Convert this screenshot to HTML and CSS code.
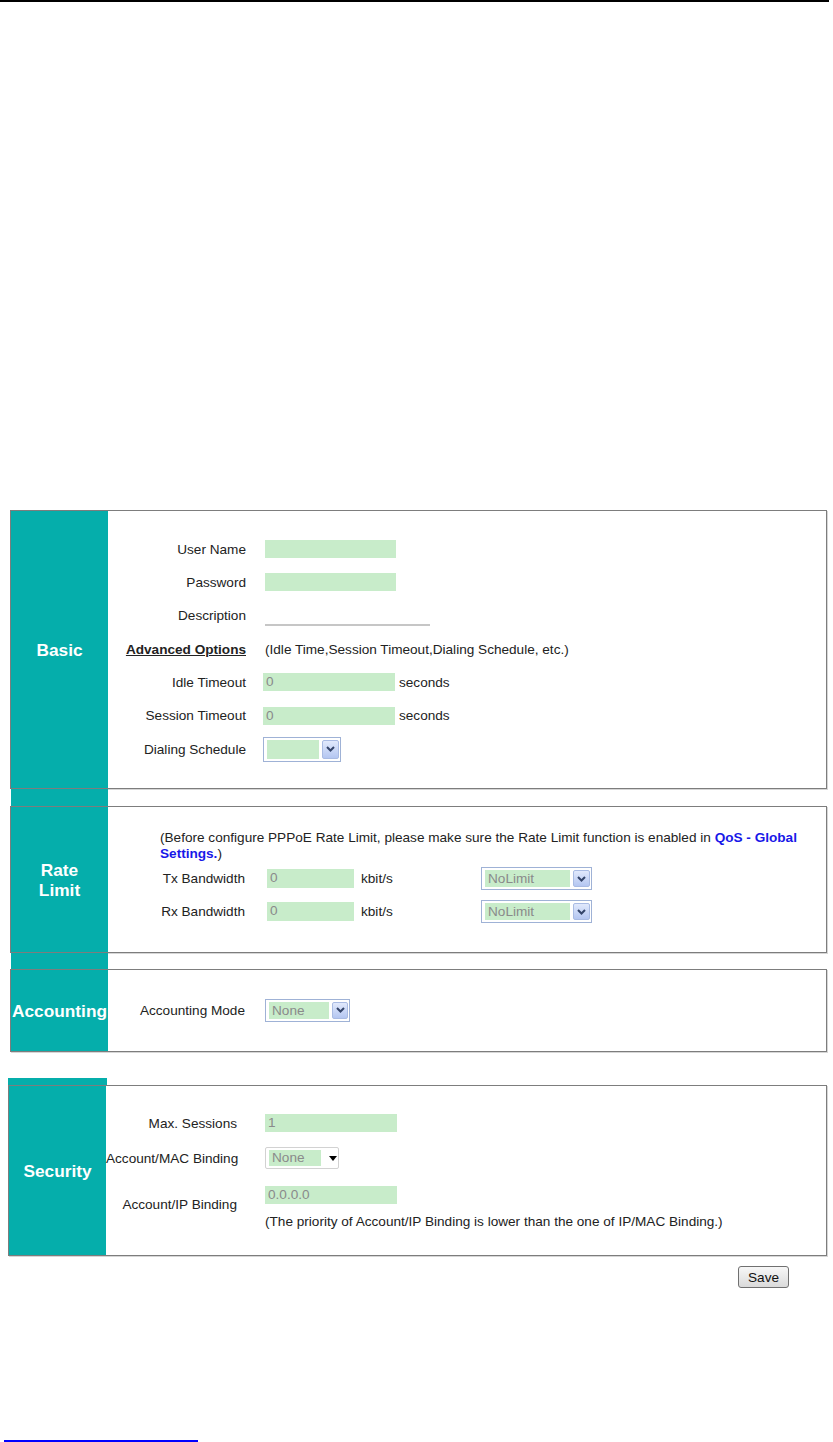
FILE: index.html
```html
<!DOCTYPE html>
<html lang="en">
<head>
    <meta charset="UTF-8">
    <meta name="viewport" content="width=device-width, initial-scale=1.0">
    <title>PPPoE Account</title>
    <link rel="stylesheet" href="styles.css">
</head>
<body>

<div class="top-rule"></div>

<div class="page">

    <!-- Basic -->
    <div class="panel panel-basic">
        <div class="panel-title">Basic</div>
        <div class="panel-body">
            <div class="row">
                <div class="label">User Name</div>
                <span class="input"></span>
            </div>
            <div class="row">
                <div class="label">Password</div>
                <span class="input"></span>
            </div>
            <div class="row">
                <div class="label">Description</div>
                <span class="input input-line"></span>
            </div>
            <div class="row">
                <div class="label"><a class="adv-link">Advanced Options</a></div>
                <span>(Idle Time,Session Timeout,Dialing Schedule, etc.)</span>
            </div>
            <div class="row">
                <div class="label">Idle Timeout</div>
                <span class="input input-shift">0</span>
                <span class="unit">seconds</span>
            </div>
            <div class="row">
                <div class="label">Session Timeout</div>
                <span class="input input-shift">0</span>
                <span class="unit">seconds</span>
            </div>
            <div class="row">
                <div class="label">Dialing Schedule</div>
                <span class="select select-sched input-shift">
                    <span class="select-value"></span>
                    <span class="select-btn"><svg width="9" height="6" viewBox="0 0 9 6"><path d="M1 1 L4.5 4.5 L8 1" fill="none" stroke="#34456a" stroke-width="2"/></svg></span>
                </span>
            </div>
        </div>
    </div>
    <div class="connector"></div>

    <!-- Rate Limit -->
    <div class="panel panel-rate">
        <div class="panel-title">Rate<br>Limit</div>
        <div class="panel-body">
            <p class="note">(Before configure PPPoE Rate Limit, please make sure the Rate Limit function is enabled in <a class="link">QoS - Global<br>Settings.</a>)</p>
            <div class="row">
                <div class="label">Tx Bandwidth</div>
                <span class="input input-rate">0</span>
                <span class="unit unit-rate">kbit/s</span>
                <span class="select select-limit">
                    <span class="select-value">NoLimit</span>
                    <span class="select-btn"><svg width="9" height="6" viewBox="0 0 9 6"><path d="M1 1 L4.5 4.5 L8 1" fill="none" stroke="#34456a" stroke-width="2"/></svg></span>
                </span>
            </div>
            <div class="row">
                <div class="label">Rx Bandwidth</div>
                <span class="input input-rate">0</span>
                <span class="unit unit-rate">kbit/s</span>
                <span class="select select-limit">
                    <span class="select-value">NoLimit</span>
                    <span class="select-btn"><svg width="9" height="6" viewBox="0 0 9 6"><path d="M1 1 L4.5 4.5 L8 1" fill="none" stroke="#34456a" stroke-width="2"/></svg></span>
                </span>
            </div>
        </div>
    </div>
    <div class="connector connector-short"></div>

    <!-- Accounting -->
    <div class="panel panel-acct">
        <div class="panel-title">Accounting</div>
        <div class="panel-body">
            <div class="row">
                <div class="label">Accounting Mode</div>
                <span class="select select-acct">
                    <span class="select-value">None</span>
                    <span class="select-btn"><svg width="9" height="6" viewBox="0 0 9 6"><path d="M1 1 L4.5 4.5 L8 1" fill="none" stroke="#34456a" stroke-width="2"/></svg></span>
                </span>
            </div>
        </div>
    </div>

    <!-- Security -->
    <div class="sec-tab"></div>
    <div class="panel panel-sec">
        <div class="panel-title">Security</div>
        <div class="panel-body sec-grid">
            <div class="label">Max. Sessions</div>
            <span class="input input-sec">1</span>

            <div class="label">Account/MAC Binding</div>
            <span class="plain-select">
                <span class="select-value">None</span>
                <span class="caret"></span>
            </span>

            <div class="label">Account/IP Binding</div>
            <div class="ip-field">
                <span class="input input-sec">0.0.0.0</span>
                <div class="ip-note">(The priority of Account/IP Binding is lower than the one of IP/MAC Binding.)</div>
            </div>
        </div>
    </div>

    <div class="actions">
        <button class="save-btn" type="button">Save</button>
    </div>

    <div class="foot-rule"></div>
</div>

</body>
</html>
```

FILE: styles.css
```css
body {
    margin: 0;
    font-family: "Liberation Sans", Arial, sans-serif;
    font-size: 13.6px;
    color: #222;
    background: #fff;
}
.top-rule {
    width: 829px;
    height: 2px;
    background: #000;
}
.page {
    padding-top: 508px;
}

/* panels */
.panel {
    display: flex;
    box-sizing: border-box;
    width: 817px;
    margin-left: 10px;
    border: 1px solid #7d7d7d;
    box-shadow: 1px 1px 0 #d6d6d6;
}
.panel-title {
    flex: none;
    width: 97px;
    display: flex;
    align-items: center;
    justify-content: center;
    text-align: center;
    background-color: #05aeab;
    color: #fff;
    font-size: 17.3px;
    font-weight: bold;
    line-height: 20px;
    white-space: nowrap;
}
.panel-body {
    flex: 1;
}
.connector {
    width: 97px;
    height: 17px;
    margin-left: 11px;
    background-color: #05aeab;
}
.connector-short {
    height: 16px;
}

.row {
    display: flex;
    align-items: center;
    height: 33.33px;
}
.label {
    flex: none;
    text-align: right;
    white-space: nowrap;
}

/* basic */
.panel-basic {
    height: 279px;
}
.panel-basic .panel-body {
    padding-top: 21.5px;
}
.panel-basic .label {
    width: 138px;
    margin-right: 19px;
}
.adv-link {
    font-weight: bold;
    text-decoration: underline;
    color: #222;
}

.input {
    display: inline-block;
    box-sizing: border-box;
    width: 131px;
    height: 18px;
    padding-left: 3px;
    line-height: 18px;
    background-color: #c8ecca;
    color: #8a8a8a;
}
.input-line {
    width: 165px;
    height: 19px;
    margin-top: 2px;
    background: none;
    border-bottom: 2px solid #c6c6c6;
}
.input-shift {
    margin-left: -2px;
    width: 132px;
}
.unit {
    margin-left: 4px;
}

/* dropdowns */
.select {
    display: inline-flex;
    box-sizing: border-box;
    height: 25px;
    padding: 2px 1px 2px 3px;
    gap: 3px;
    border: 1px solid #9fb2d6;
    background: #fff;
}
.select-value {
    flex: 1;
    padding-left: 3px;
    line-height: 19px;
    background-color: #c8ecca;
    color: #8a8a8a;
}
.select-btn {
    display: flex;
    align-items: center;
    justify-content: center;
    box-sizing: border-box;
    width: 17px;
    border: 1px solid #a9bbe3;
    border-radius: 2px;
    background: linear-gradient(#e1e9fc, #b4c6f1);
}
.select-sched {
    width: 78px;
}
.select-limit {
    width: 111px;
    height: 23px;
}
.select-limit .select-value,
.select-acct .select-value {
    line-height: 17px;
}
.select-acct {
    width: 85px;
    height: 23px;
}
.select-acct .select-btn {
    width: 16px;
}

/* rate limit */
.panel-rate {
    height: 147px;
}
.panel-rate .panel-body {
    padding-top: 23px;
}
.panel-rate .label {
    width: 137px;
    margin-right: 22px;
}
.note {
    margin: 0;
    padding-left: 52px;
    line-height: 16px;
}
.link {
    color: #1818e8;
    font-weight: bold;
}
.input-rate {
    width: 87px;
    height: 19px;
}
.unit-rate {
    flex: none;
    width: 120px;
    margin-left: 7px;
}

/* accounting */
.panel-acct {
    height: 83px;
}
.panel-acct .panel-body {
    padding-top: 23.5px;
}
.panel-acct .label {
    width: 137px;
    margin-right: 20px;
}

/* security */
.sec-tab {
    width: 99px;
    height: 7px;
    margin-top: 26px;
    margin-left: 8px;
    background-color: #05aeab;
}
.panel-sec {
    height: 171px;
    width: 819px;
    margin-left: 8px;
}
.sec-grid {
    display: grid;
    grid-template-columns: 131px auto;
    grid-template-rows: 34px 36px auto;
    column-gap: 28px;
    align-items: center;
    justify-content: start;
    align-content: start;
    padding-top: 20px;
}
.input-sec {
    width: 132px;
}
.plain-select {
    display: inline-flex;
    align-items: center;
    box-sizing: border-box;
    width: 74px;
    height: 22px;
    padding: 2px 3px;
    border: 1px solid #d2d2d2;
    border-radius: 2px;
}
.plain-select .select-value {
    flex: none;
    width: 49px;
    line-height: 16px;
}
.caret {
    width: 0;
    height: 0;
    margin-left: 8px;
    border-left: 4px solid transparent;
    border-right: 4px solid transparent;
    border-top: 5px solid #000;
}
.ip-field {
    padding-top: 10px;
}
.ip-field .input {
    display: block;
}
.ip-note {
    margin-top: 8px;
    line-height: 20px;
    white-space: nowrap;
}

/* bottom */
.actions {
    width: 817px;
    margin-left: 10px;
    margin-top: 10px;
    padding-right: 38px;
    box-sizing: border-box;
    text-align: right;
}
.save-btn {
    width: 51px;
    height: 22px;
    padding: 0;
    font-family: "Liberation Sans", Arial, sans-serif;
    font-size: 13.6px;
    color: #111;
    border: 1px solid #707070;
    border-radius: 3px;
    background: linear-gradient(#f7f7f7, #dadada);
}
.foot-rule {
    width: 194px;
    height: 2px;
    margin-top: 152px;
    margin-left: 4px;
    background-color: #0000ff;
}
```
